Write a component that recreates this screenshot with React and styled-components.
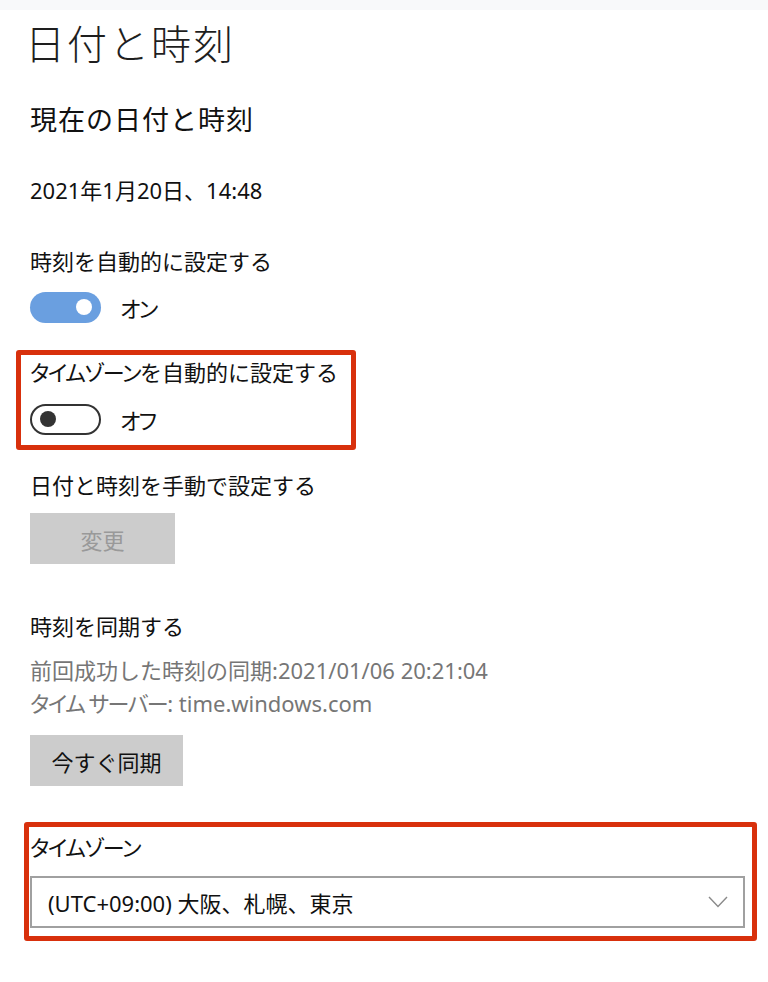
import React from 'react';
import styled, { createGlobalStyle } from 'styled-components';

const GlobalStyle = createGlobalStyle`
  html, body {
    margin: 0;
    padding: 0;
    background: #ffffff;
  }
  body {
    font-family: "Noto Sans", "Noto Sans CJK JP", sans-serif;
    color: #111111;
  }
`;

const TopStrip = styled.div`
  height: 10px;
  background: #f8f9fa;
`;

const Page = styled.div`
  width: 768px;
  padding-left: 30px;
  box-sizing: border-box;
`;

const Title = styled.h1`
  margin: 14px 0 0 -5px;
  font-size: 40px;
  line-height: 40px;
  font-weight: 300;
  letter-spacing: 2px;
  color: #1e1e1e;
`;

const SubTitle = styled.h2`
  margin: 41px 0 0;
  font-size: 27px;
  line-height: 30px;
  font-weight: 400;
  letter-spacing: 1px;
`;

const Text = styled.div`
  margin-top: ${(p) => p.$top ?? 0}px;
  font-size: 22px;
  line-height: 24px;
  color: #111111;
`;

// Yu Gothic UI draws katakana narrower than the kanji around it
const Kana = styled.span`
  font-feature-settings: "palt";
  letter-spacing: -1.5px;
`;

const Info = styled.div`
  margin-top: 16px;
  font-size: 22px;
  line-height: 33px;
  color: #767676;
`;

const ToggleRow = styled.div`
  display: flex;
  align-items: center;
  gap: 19px;
  height: 32px;
  margin-top: ${(p) => p.$top}px;
  font-size: 22px;
`;

const Track = styled.span`
  position: relative;
  box-sizing: border-box;
  width: 71px;
  height: 31px;
  border-radius: 16px;
  background: ${(p) => (p.$on ? '#6a9fe0' : '#ffffff')};
  border: ${(p) => (p.$on ? 'none' : '2.5px solid #333333')};
`;

const Knob = styled.span`
  position: absolute;
  top: 50%;
  width: 16px;
  height: 16px;
  margin-top: -8px;
  border-radius: 50%;
  background: ${(p) => (p.$on ? '#ffffff' : '#333333')};
  ${(p) => (p.$on ? 'right: 9px;' : 'left: 8px;')}
`;

const Highlight = styled.div`
  box-sizing: border-box;
  width: ${(p) => p.$width}px;
  margin-top: ${(p) => p.$top}px;
  margin-left: ${(p) => -p.$inset}px;
  padding: ${(p) => p.$pad};
  border: 5px solid #d8300c;
  border-radius: 3px;
`;

const Button = styled.div`
  box-sizing: border-box;
  display: flex;
  align-items: center;
  justify-content: center;
  width: ${(p) => p.$width}px;
  height: 51px;
  margin-top: ${(p) => p.$top}px;
  background: #cccccc;
  font-size: 22px;
  color: ${(p) => (p.$disabled ? '#999999' : '#111111')};
`;

const Select = styled.div`
  box-sizing: border-box;
  display: flex;
  align-items: center;
  justify-content: space-between;
  width: 715px;
  height: 52px;
  margin-top: 17px;
  padding: 0 15px 0 16px;
  border: 2.5px solid #a0a0a0;
  font-size: 22px;
  color: #111111;
`;

const Toggle = ({ on, label, top }) => (
  <ToggleRow $top={top}>
    <Track $on={on}>
      <Knob $on={on} />
    </Track>
    <Kana>{label}</Kana>
  </ToggleRow>
);

const Chevron = () => (
  <svg width="20" height="12" viewBox="0 0 20 12">
    <polyline points="1,1 10,10.5 19,1" fill="none" stroke="#8a8a8a" strokeWidth="1.4" />
  </svg>
);

export default function App() {
  return (
    <>
      <GlobalStyle />
      <TopStrip />
      <Page>
        <Title>日付と時刻</Title>
        <SubTitle>現在の日付と時刻</SubTitle>
        <Text $top={43}>2021年1月20日、14:48</Text>

        <Text $top={47}>時刻を自動的に設定する</Text>
        <Toggle on label="オン" top={18} />

        <Highlight $top={27} $inset={14} $width={340} $pad="5px 0 10px 9px">
          <Text>
            <Kana>タイムゾーン</Kana>を自動的に設定する
          </Text>
          <Toggle on={false} label="オフ" top={19} />
        </Highlight>

        <Text $top={23}>日付と時刻を手動で設定する</Text>
        <Button $top={16} $width={145} $disabled>
          変更
        </Button>

        <Text $top={50}>時刻を同期する</Text>
        <Info>
          前回成功した時刻の同期:2021/01/06 20:21:04
          <br />
          <Kana>タイム サーバー</Kana>: time.windows.com
        </Info>
        <Button $top={15} $width={153}>
          今すぐ同期
        </Button>

        <Highlight $top={36} $inset={6} $width={733} $pad="8px 0 8px 1px">
          <Text>
            <Kana>タイムゾーン</Kana>
          </Text>
          <Select>
            <span>(UTC+09:00) 大阪、札幌、東京</span>
            <Chevron />
          </Select>
        </Highlight>
      </Page>
    </>
  );
}
